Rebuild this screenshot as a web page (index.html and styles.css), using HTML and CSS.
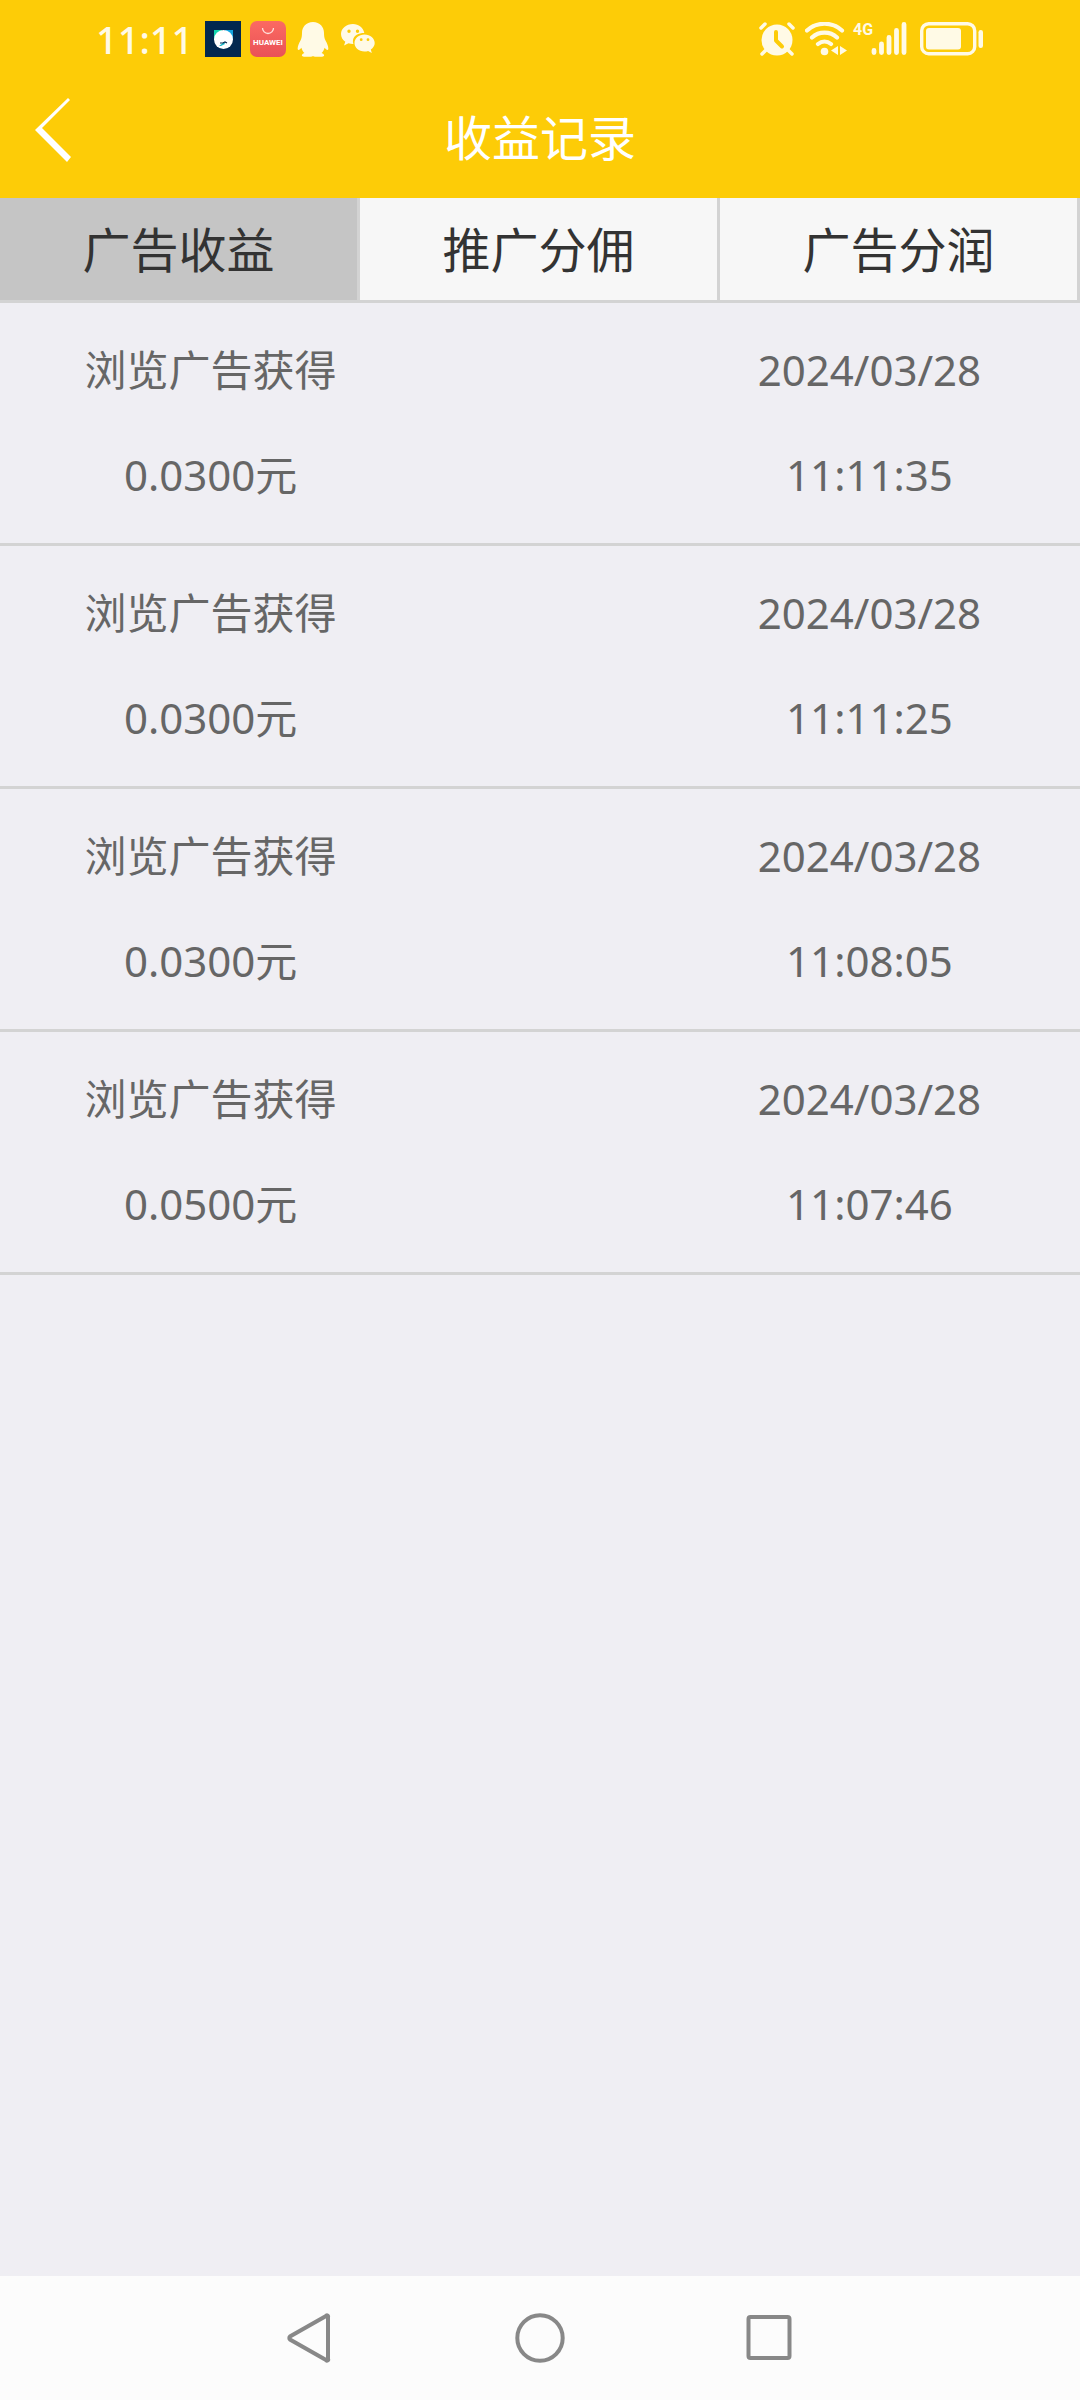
FILE: index.html
```html
<!DOCTYPE html>
<html lang="zh-CN">
<head>
<meta charset="utf-8">
<meta name="viewport" content="width=device-width, initial-scale=1">
<title>收益记录</title>
<link rel="stylesheet" href="styles.css">
</head>
<body>
<div class="status-bar">
  <div class="status-left">
    <span class="clock">11:11</span>
    <svg class="app-icon" viewBox="0 0 36 36" aria-hidden="true">
      <rect width="36" height="36" fill="#02284f"/>
      <path d="M9 9h8v10H9z" fill="#12d6ae"/>
      <path d="M20 9h8v10h-8z" fill="#12a5e0"/>
      <circle cx="18.500" cy="18.500" r="9.500" fill="#fff"/>
      <path d="M14 25l5-4 1 2-4 2z" fill="#18b8c8"/>
      <path d="M15 22h3l2-1 2 1" fill="none" stroke="#02284f" stroke-width="1.200"/>
    </svg>
    <svg class="app-icon" viewBox="0 0 36 36" aria-hidden="true">
      <defs><linearGradient id="store" x1="0" y1="0" x2="0" y2="1"><stop offset="0" stop-color="#fb6a62"/><stop offset="1" stop-color="#e95257"/></linearGradient></defs>
      <rect width="36" height="36" rx="7" fill="url(#store)"/>
      <path d="M12.500 7a5.500 5.500 0 0 0 11 0" fill="none" stroke="#ffe0dc" stroke-width="1.300"/>
      <text class="store-name" x="18" y="24" text-anchor="middle">HUAWEI</text>
    </svg>
    <svg class="qq-icon" viewBox="0 0 32 36" aria-hidden="true">
      <path d="M16 1C9 1 5 6 5 12c0 3-.3 5-1.500 7.500C1.500 23 .5 26 .7 28c.2 1.800 1.600 1.200 3.700-1.200.6 2.200 1.600 3.900 3 5.200-1.700.8-2.900 1.800-2.400 3 .5 1.100 9.500 1.200 11 0 1.500 1.200 10.500 1.100 11 0 .5-1.200-.7-2.200-2.400-3 1.400-1.300 2.400-3 3-5.200 2.100 2.400 3.500 3 3.700 1.200.2-2-.8-5-2.800-8.500C27.300 17 27 15 27 12 27 6 23 1 16 1z"/>
    </svg>
    <svg class="wechat-icon" viewBox="0 0 34 30" aria-hidden="true">
      <path fill-rule="evenodd" d="M12 0C5.200 0 0 4.500 0 10c0 3.200 1.700 6 4.300 7.800L3 21.500l4.500-2.200c1.400.4 3 .7 4.500.7h.4c-.5-1.300-.6-2.600-.4-4C12.800 11.500 17.500 9 23.300 9 22.200 3.700 17.700 0 12 0zM8 5.500a1.700 1.700 0 1 1 0 3.400 1.700 1.700 0 0 1 0-3.400zm8.500 0a1.700 1.700 0 1 1 0 3.400 1.700 1.700 0 0 1 0-3.400z"/>
      <path fill-rule="evenodd" d="M23.500 10.500c-5.700 0-10 3.700-10 8.500s4.300 8.500 10 8.500c1.300 0 2.500-.2 3.600-.6l3.700 2.100-1-3.600c2.500-1.500 3.900-3.800 3.900-6.400 0-4.800-4.400-8.500-10.200-8.500zm-3.300 3.800a1.400 1.400 0 1 1 0 2.800 1.400 1.400 0 0 1 0-2.800zm6.800 0a1.400 1.400 0 1 1 0 2.800 1.400 1.400 0 0 1 0-2.800z"/>
    </svg>
  </div>
  <div class="status-right">
    <svg class="alarm-icon" viewBox="0 0 36 34" aria-hidden="true">
      <circle cx="18" cy="18" r="15.500"/>
      <path class="line" d="M2 6l4-4M34 6l-4-4M7 28l-4 4M29 28l4 4" stroke-width="3.500"/>
      <path d="M17 10v8.500l6 6" fill="none" stroke="#fdcc07" stroke-width="4" stroke-linecap="round" stroke-linejoin="round"/>
    </svg>
    <svg class="wifi-icon" viewBox="0 0 42 34" aria-hidden="true">
      <path class="line" d="M2 8.500c10-9 25-9 35 0M7 15.500c7-6.500 18-6.500 25 0M13 22c4-3.300 9-3.300 13 0" stroke-width="4.200"/>
      <circle cx="19.500" cy="29.500" r="3.800"/>
      <path d="M33 24v9l-7-4.500zM35 24v9l7-4.500z"/>
    </svg>
    <span class="network">4G</span>
    <svg class="signal-icon" viewBox="0 0 36 34" aria-hidden="true">
      <path class="line" d="M3 28.500v2M10.500 22v8.500M18 15.500v15M25.500 8.500v22M33 2.500v28" stroke-width="4.800"/>
    </svg>
    <svg class="battery-icon" viewBox="0 0 64 34" aria-hidden="true">
      <rect class="line" x="1.700" y="1.700" width="53" height="30" rx="7" stroke-width="3.400"/>
      <rect x="6" y="6" width="35" height="21.500" rx="3"/>
      <rect x="58.500" y="8" width="4.500" height="18" rx="2.200"/>
    </svg>
  </div>
</div>

<header class="title-bar">
  <button class="back" type="button" aria-label="返回">
    <svg viewBox="0 0 36 64" aria-hidden="true"><path d="M33 0l2 2L7 30l29 29-4 5L0 32z"/></svg>
  </button>
  <h1 class="title">收益记录</h1>
</header>

<nav class="tabs">
  <button class="tab tab-active" type="button" aria-pressed="true">广告收益</button>
  <button class="tab" type="button">推广分佣</button>
  <button class="tab" type="button">广告分润</button>
</nav>

<main class="records">
  <ul class="list">
    <li class="record">
      <div class="cell"><span>浏览广告获得</span><span>0.0300元</span></div>
      <div class="cell"><span>2024/03/28</span><span>11:11:35</span></div>
    </li>
    <li class="record">
      <div class="cell"><span>浏览广告获得</span><span>0.0300元</span></div>
      <div class="cell"><span>2024/03/28</span><span>11:11:25</span></div>
    </li>
    <li class="record">
      <div class="cell"><span>浏览广告获得</span><span>0.0300元</span></div>
      <div class="cell"><span>2024/03/28</span><span>11:08:05</span></div>
    </li>
    <li class="record">
      <div class="cell"><span>浏览广告获得</span><span>0.0500元</span></div>
      <div class="cell"><span>2024/03/28</span><span>11:07:46</span></div>
    </li>
  </ul>
</main>

<footer class="system-nav">
  <button class="nav-key" type="button" aria-label="后退">
    <svg viewBox="0 0 50 50" aria-hidden="true"><path d="M43 4v42a1 1 0 0 1-2 1L5 26.500a2 2 0 0 1 0-3L41 3a1 1 0 0 1 2 1z"/></svg>
  </button>
  <button class="nav-key" type="button" aria-label="主屏幕">
    <svg viewBox="0 0 50 50" aria-hidden="true"><circle cx="25" cy="25" r="22.700"/></svg>
  </button>
  <button class="nav-key" type="button" aria-label="最近任务">
    <svg viewBox="0 0 50 50" aria-hidden="true"><rect x="3.500" y="4" width="41" height="41" rx="2"/></svg>
  </button>
</footer>
</body>
</html>
```
FILE: styles.css
```css
* {
  box-sizing: border-box;
}

body {
  margin: 0;
  min-height: 100vh;
  display: flex;
  flex-direction: column;
  background: #efeef3;
  color: #666;
  font-family: "Noto Sans", "Noto Sans CJK SC", sans-serif;
}

button {
  margin: 0;
  padding: 0;
  border: 0;
  background: none;
  color: inherit;
  font: inherit;
}

svg {
  display: block;
  flex: none;
}

/* Status bar */
.status-bar {
  height: 78px;
  padding: 0 96px;
  display: flex;
  justify-content: space-between;
  align-items: center;
  background: #fdcc07;
  color: #fffae6;
}

.status-left,
.status-right {
  display: flex;
  align-items: center;
  fill: #fffae6;
}

.status-left {
  gap: 9px;
}

.status-right {
  gap: 10px;
}

.status-bar .line {
  fill: none;
  stroke: #fffae6;
  stroke-linecap: round;
}

.clock {
  width: 100px;
  font-size: 38px;
  font-weight: 500;
  line-height: 48px;
}

.app-icon {
  width: 36px;
  height: 36px;
}

.store-name {
  font: bold 8px Roboto, sans-serif;
  fill: #fff;
}

.qq-icon {
  width: 36px;
  height: 36px;
}

.wechat-icon {
  width: 36px;
  height: 30px;
}

.alarm-icon {
  width: 36px;
  height: 34px;
}

.wifi-icon {
  width: 42px;
  height: 34px;
}

.network {
  width: 18px;
  margin: 0 -10px 0 -4px;
  align-self: flex-start;
  font: bold 16px/16px "Liberation Sans Narrow", Roboto, sans-serif;
}

.signal-icon {
  width: 36px;
  height: 34px;
  margin-right: 3px;
}

.battery-icon {
  width: 64px;
  height: 34px;
}

/* Title bar */
.title-bar {
  height: 120px;
  padding: 0 35px;
  display: grid;
  grid-template-columns: 36px 1fr 36px;
  background: #fdcc07;
  color: #fff;
}

.back {
  padding-top: 20px;
  align-self: start;
}

.back svg {
  width: 36px;
  height: 64px;
  fill: #fff;
}

.title {
  margin: 0;
  font-size: 48px;
  font-weight: 400;
  line-height: 120px;
  text-align: center;
}

/* Tabs */
.tabs {
  display: grid;
  grid-template-columns: repeat(3, 1fr);
}

.tab {
  height: 105px;
  padding-top: 2px;
  border-right: 3px solid #d3d3d3;
  border-bottom: 3px solid #d3d3d3;
  background: #f7f7f7;
  color: #333;
  font-size: 48px;
  line-height: 100px;
}

.tab-active {
  background: #c5c5c5;
}

/* Earnings list */
.records {
  flex: 1;
}

.list {
  margin: 0;
  padding: 0;
  list-style: none;
}

.record {
  padding: 14px 0 16px;
  display: flex;
  justify-content: space-between;
  border-bottom: 3px solid #d3d3d3;
}

.cell {
  width: 39%;
  display: flex;
  flex-direction: column;
  font-size: 42px;
  line-height: 105px;
  text-align: center;
}

/* System navigation */
.system-nav {
  height: 124px;
  display: flex;
  justify-content: center;
  align-items: center;
  gap: 180px;
  background: #fcfcfc;
}

.nav-key svg {
  width: 50px;
  height: 50px;
  fill: none;
  stroke: #888;
  stroke-width: 4px;
}
```
